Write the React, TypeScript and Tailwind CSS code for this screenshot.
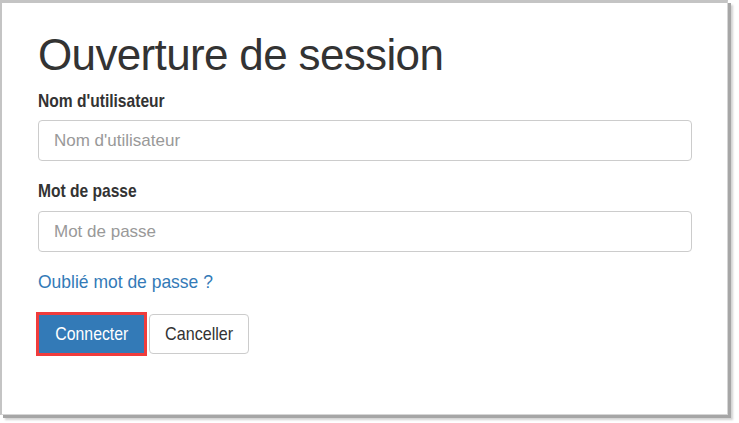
import React from "react";

const sans = "font-['Liberation_Sans',Arial,sans-serif]";

export default function App() {
  return (
    <div className="w-[739px] h-[423px] bg-white">
      <div className="w-[728px] h-[415px] bg-white border-l-2 border-t-[3px] border-[#c4c4c4] border-r border-r-[#d6d6d6] border-b border-b-[#d6d6d6] shadow-[3px_3px_0_#a6a6a6,5px_5px_2px_rgba(0,0,0,0.18)] pl-[36px] pt-[27px]">
        <h1 className={`${sans} text-[44px] leading-[50px] tracking-[-0.65px] text-[#333333]`}>
          Ouverture de session
        </h1>
        <form className="w-[654px] flex flex-col" onSubmit={(e) => e.preventDefault()}>
          <label className={`${sans} mt-[10px] text-[19px] leading-[22px] font-bold text-[#333333]`}>
            <span className="inline-block origin-left scale-x-[0.82]">Nom d'utilisateur</span>
          </label>
          <input
            type="text"
            placeholder="Nom d'utilisateur"
            className={`${sans} mt-[8px] h-[41px] w-full rounded-[4px] border border-[#cccccc] px-[15px] text-[17px] text-[#555555] placeholder:text-[#999999] outline-none`}
          />
          <label className={`${sans} mt-[19px] text-[19px] leading-[22px] font-bold text-[#333333]`}>
            <span className="inline-block origin-left scale-x-[0.82]">Mot de passe</span>
          </label>
          <input
            type="password"
            placeholder="Mot de passe"
            className={`${sans} mt-[9px] h-[41px] w-full rounded-[4px] border border-[#cccccc] px-[15px] text-[17px] text-[#555555] placeholder:text-[#999999] outline-none`}
          />
          <div className="mt-[19px] leading-[22px]">
            <a href="#" className={`${sans} text-[19px] leading-[22px] text-[#337ab7]`}>
              <span className="inline-block origin-left scale-x-[0.92]">Oublié mot de passe ?</span>
            </a>
          </div>
          <div className="mt-[21px] flex items-center">
            <button
              type="submit"
              className={`${sans} w-[107px] h-[40px] bg-[#337ab7] border border-[#f03c3c] outline-2 outline-solid outline-[#f03c3c] text-white text-[19px] leading-[22px] flex items-center justify-center`}
            >
              <span className="inline-block scale-x-[0.833]">Connecter</span>
            </button>
            <button
              type="button"
              className={`${sans} ml-[4px] w-[100px] h-[40px] rounded-[4px] border border-[#cccccc] bg-white text-[#333333] text-[19px] leading-[22px] flex items-center justify-center`}
            >
              <span className="inline-block scale-x-[0.848]">Canceller</span>
            </button>
          </div>
        </form>
      </div>
    </div>
  );
}
